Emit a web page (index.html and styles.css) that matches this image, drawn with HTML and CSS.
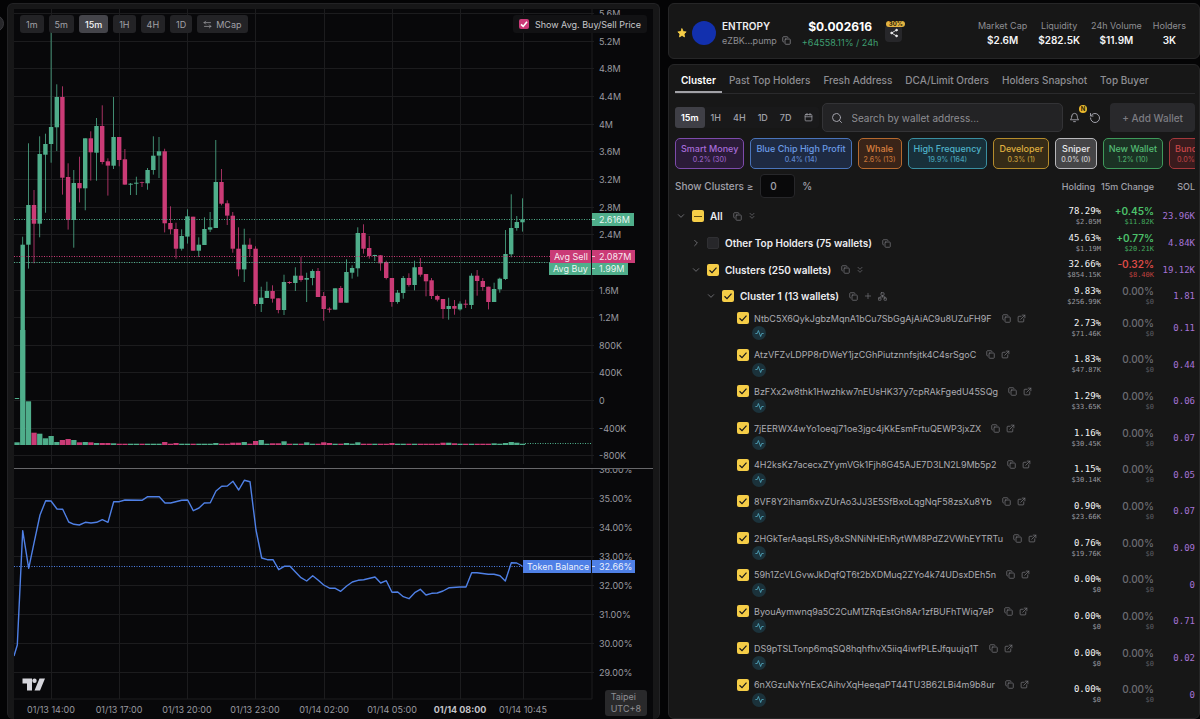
FILE: index.html
```html
<!DOCTYPE html>
<html lang="en">
<head>
<meta charset="utf-8">
<title>ENTROPY – Cluster</title>
<link rel="stylesheet" href="styles.css">
</head>
<body>
<svg class="sprite" aria-hidden="true">
  <symbol id="i-copy" viewBox="0 0 24 24"><rect x="8" y="8" width="14" height="14" rx="2"/><path d="M4 16c-1.1 0-2-.9-2-2V4c0-1.1.9-2 2-2h10c1.1 0 2 .9 2 2"/></symbol>
  <symbol id="i-ext" viewBox="0 0 24 24"><path d="M14 3h7v7M10 14 21 3M18 13v6a2 2 0 0 1-2 2H5a2 2 0 0 1-2-2V8a2 2 0 0 1 2-2h6"/></symbol>
  <symbol id="i-down" viewBox="0 0 24 24"><path d="m4 8 8 8 8-8"/></symbol>
  <symbol id="i-right" viewBox="0 0 24 24"><path d="m8 4 8 8-8 8"/></symbol>
  <symbol id="i-ddown" viewBox="0 0 24 24"><path d="m6 4 6 6 6-6M6 13l6 6 6-6"/></symbol>
  <symbol id="i-plus" viewBox="0 0 24 24"><path d="M12 4v16M4 12h16"/></symbol>
  <symbol id="i-nodes" viewBox="0 0 24 24"><rect x="8" y="2" width="8" height="7" rx="1"/><rect x="1" y="16" width="7" height="6" rx="1"/><rect x="16" y="16" width="7" height="6" rx="1"/><path d="M12 9v4M5 16v-3h14v3"/></symbol>
  <symbol id="i-pulse" viewBox="0 0 24 24"><path d="M2 12h4l3 -8 6 16 3-8h4"/></symbol>
  <symbol id="i-cal" viewBox="0 0 24 24"><rect x="3" y="4" width="18" height="17" rx="2"/><path d="M8 1v5M16 1v5M3 10h18"/></symbol>
  <symbol id="i-search" viewBox="0 0 24 24"><circle cx="11" cy="11" r="8"/><path d="m21 21-4-4"/></symbol>
  <symbol id="i-bell" viewBox="0 0 24 24"><path d="M6 9a6 6 0 0 1 12 0c0 6 3 8 3 8H3s3-2 3-8M10 21h4"/></symbol>
  <symbol id="i-reset" viewBox="0 0 24 24"><path d="M3 12a9 9 0 1 0 9-9 9.700 9.700 0 0 0-6.700 2.700L3 8M3 3v5h5"/></symbol>
  <symbol id="i-share" viewBox="0 0 24 24"><path d="M18 5 6 12l12 7"/><circle class="solid" cx="18" cy="5" r="2"/><circle class="solid" cx="6" cy="12" r="2"/><circle class="solid" cx="18" cy="19" r="2"/></symbol>
  <symbol id="i-star" viewBox="0 0 24 24"><path class="solid" d="m12 2 3 6.500 7 .9-5.200 4.900 1.400 7L12 17.800l-6.200 3.500 1.400-7L2 9.400l7-.9z"/></symbol>
  <symbol id="i-swap" viewBox="0 0 24 24"><path d="M7 3 3 7l4 4M3 7h17M17 13l4 4-4 4M21 17H4"/></symbol>
</svg>

<button class="edge-handle" type="button" aria-label="Toggle sidebar"></button>

<main class="layout">
  <section class="chart-panel">
    <div class="chart">
      <svg class="plot" id="plot" viewBox="14 9 639 710" role="img" aria-label="Market cap and token balance chart"></svg>
      <div class="chart-bar">
        <div class="frames">
          <button type="button">1m</button>
          <button type="button">5m</button>
          <button type="button" class="on">15m</button>
          <button type="button">1H</button>
          <button type="button">4H</button>
          <button type="button">1D</button>
          <button type="button"><svg class="ic s9"><use href="#i-swap"/></svg>MCap</button>
        </div>
        <label class="avg"><input type="checkbox" class="check pink" checked>Show Avg. Buy/Sell Price</label>
      </div>
      <button type="button" class="zone">Taipei<br>UTC+8</button>
    </div>
  </section>

  <div class="side">
    <header class="card token">
      <button class="plain star" type="button" aria-label="Favourite"><svg class="ic s10"><use href="#i-star"/></svg></button>
      <span class="logo"></span>
      <div class="ident">
        <span class="name">ENTROPY</span>
        <span class="addr">eZBK...pump <button class="plain" type="button" aria-label="Copy"><svg class="ic s9"><use href="#i-copy"/></svg></button></span>
      </div>
      <div class="price">
        <strong>$0.002616</strong>
        <span>+64558.11% / 24h</span>
      </div>
      <button class="share" type="button" aria-label="Share"><svg class="ic s10"><use href="#i-share"/></svg><span class="badge">30%</span></button>
      <dl class="stats">
        <div><dt>Market Cap</dt><dd>$2.6M</dd></div>
        <div><dt>Liquidity</dt><dd>$282.5K</dd></div>
        <div><dt>24h Volume</dt><dd>$11.9M</dd></div>
        <div><dt>Holders</dt><dd>3K</dd></div>
      </dl>
    </header>

    <section class="card body">
      <nav class="tabs">
        <a href="#cluster" class="on">Cluster</a>
        <a href="#past">Past Top Holders</a>
        <a href="#fresh">Fresh Address</a>
        <a href="#dca">DCA/Limit Orders</a>
        <a href="#snapshot">Holders Snapshot</a>
        <a href="#buyer">Top Buyer</a>
      </nav>

      <div class="filters">
        <div class="ranges">
          <button type="button" class="on">15m</button>
          <button type="button">1H</button>
          <button type="button">4H</button>
          <button type="button">1D</button>
          <button type="button">7D</button>
          <button type="button" aria-label="Pick date"><svg class="ic s9"><use href="#i-cal"/></svg></button>
        </div>
        <label class="search"><svg class="ic s12"><use href="#i-search"/></svg><input type="text" aria-label="Search by wallet address" placeholder="Search by wallet address..."></label>
        <div class="tools">
          <button class="plain bell" type="button" aria-label="Alerts"><svg class="ic s11"><use href="#i-bell"/></svg><span class="dot">N</span></button>
          <button class="plain" type="button" aria-label="Reset"><svg class="ic s12"><use href="#i-reset"/></svg></button>
        </div>
        <button class="add" type="button">+ Add Wallet</button>
      </div>

      <div class="chips">
        <button type="button" class="chip purple"><b>Smart Money</b><span>0.2% (30)</span></button>
        <button type="button" class="chip blue"><b>Blue Chip High Profit</b><span>0.4% (14)</span></button>
        <button type="button" class="chip orange"><b>Whale</b><span>2.6% (13)</span></button>
        <button type="button" class="chip cyan"><b>High Frequency</b><span>19.9% (164)</span></button>
        <button type="button" class="chip yellow"><b>Developer</b><span>0.3% (1)</span></button>
        <button type="button" class="chip grey"><b>Sniper</b><span>0.0% (0)</span></button>
        <button type="button" class="chip green"><b>New Wallet</b><span>1.2% (10)</span></button>
        <button type="button" class="chip red"><b>Bundler</b><span>0.0% (0)</span></button>
      </div>

      <div class="cols head">
        <label class="min">Show Clusters ≥ <input type="text" value="0"> %</label>
        <span class="h-hold">Holding</span><span>15m Change</span><span>SOL</span>
      </div>

      <div class="tree" id="holders">
        <div class="cols row">
          <div class="cell"><button class="plain twist" type="button" aria-label="Collapse"><svg class="ic s8"><use href="#i-down"/></svg></button><input type="checkbox" class="check part" id="all"><label for="all">All</label><svg class="ic s9"><use href="#i-copy"/></svg><svg class="ic s8"><use href="#i-ddown"/></svg></div>
          <div class="hold">78.29%<small>$2.05M</small></div><div class="chg up">+0.45%<small>$11.82K</small></div><div class="sol">23.96K</div>
        </div>
        <div class="cols row">
          <div class="cell l2"><button class="plain twist" type="button" aria-label="Expand"><svg class="ic s8"><use href="#i-right"/></svg></button><input type="checkbox" class="check" id="other"><label for="other">Other Top Holders (75 wallets)</label><svg class="ic s9"><use href="#i-copy"/></svg></div>
          <div class="hold">45.63%<small>$1.19M</small></div><div class="chg up">+0.77%<small>$20.21K</small></div><div class="sol">4.84K</div>
        </div>
        <div class="cols row">
          <div class="cell l2"><button class="plain twist" type="button" aria-label="Collapse"><svg class="ic s8"><use href="#i-down"/></svg></button><input type="checkbox" class="check" id="clusters" checked><label for="clusters">Clusters (250 wallets)</label><svg class="ic s9"><use href="#i-copy"/></svg><svg class="ic s8"><use href="#i-ddown"/></svg></div>
          <div class="hold">32.66%<small>$854.15K</small></div><div class="chg dn">-0.32%<small>$8.40K</small></div><div class="sol">19.12K</div>
        </div>
        <div class="cols row">
          <div class="cell l3"><button class="plain twist" type="button" aria-label="Collapse"><svg class="ic s8"><use href="#i-down"/></svg></button><input type="checkbox" class="check" id="c1" checked><label for="c1">Cluster 1 (13 wallets)</label><svg class="ic s9"><use href="#i-copy"/></svg><svg class="ic s8"><use href="#i-plus"/></svg><svg class="ic s9"><use href="#i-nodes"/></svg></div>
          <div class="hold">9.83%<small>$256.99K</small></div><div class="chg">0.00%<small>$0</small></div><div class="sol">1.81</div>
        </div>
      </div>
    </section>
  </div>
</main>
<script src="app.js"></script>
</body>
</html>
```

FILE: styles.css
```css
* { box-sizing: border-box; }
body {
  margin: 0;
  background: #040405;
  color: #a1a1aa;
  font-family: Inter, "Liberation Sans", sans-serif;
  font-size: 9px;
}
button, input { font: inherit; color: inherit; }
button { border: 0; cursor: pointer; }
a { color: inherit; text-decoration: none; }
.sprite { display: none; }
.ic { fill: none; stroke: currentColor; stroke-width: 2; stroke-linecap: round; stroke-linejoin: round; flex: none; display: block; }
.solid { fill: currentColor; }
.s8 { width: 8px; height: 8px; }
.s9 { width: 9px; height: 9px; }
.s10 { width: 10px; height: 10px; }
.s11 { width: 11px; height: 11px; }
.s12 { width: 12px; height: 12px; }
.plain { background: none; padding: 0; display: inline-flex; }
.twist { width: 11px; justify-content: center; color: #94949a; }
.edge-handle { position: absolute; left: -13px; top: 15px; width: 17px; height: 17px; padding: 0; border-radius: 50%; background: #27272a; border: 1px solid #3a3a3e; }

.layout { display: grid; grid-template-columns: minmax(0, 653fr) minmax(0, 532fr); gap: 8px; padding: 3px 0 0 7px; min-height: 100vh; }

/* chart */
.chart-panel { background: #171718; border: 1px solid #232325; border-bottom: 0; border-radius: 6px; padding: 5px 6px 0; overflow: hidden; }
.chart { position: relative; background: #08080a; height: 100%; }
.plot { display: block; width: 100%; height: auto; font-size: 9px; }
.plot .tick { fill: #9a9aa0; }
.plot .strong { fill: #c4c4c8; font-weight: 700; }
.plot .tag { fill: #fff; fill-opacity: .9; }
.chart-bar { position: absolute; top: 6px; left: 6px; right: 6px; display: flex; justify-content: space-between; }
.frames { display: flex; gap: 5px; }
.frames button { display: flex; align-items: center; gap: 4px; height: 18px; padding: 0 6px; border-radius: 3px; background: #232326; color: #a1a1a6; }
.frames .on { background: #44444a; color: #f4f4f5; font-weight: 500; }
.avg { display: flex; align-items: center; gap: 6px; height: 18px; padding: 0 6px; border-radius: 3px; background: #121214; color: #c8c8cc; }
.zone { position: absolute; right: 6px; bottom: 3px; padding: 1px 6px; border-radius: 3px; background: #29292b; color: #8e8e93; text-align: left; line-height: 12px; }

.check { appearance: none; flex: none; width: 12px; height: 12px; margin: 0; border-radius: 2px; background: #27272a center / 10px no-repeat; border: 1px solid #303033; }
.check:checked { border: 0; background-color: #f5cd47; background-image: url("data:image/svg+xml,%3Csvg xmlns='http://www.w3.org/2000/svg' viewBox='0 0 10 10'%3E%3Cpath d='M1.5 5.300 4 7.600 8.500 2.600' fill='none' stroke='%2318181b' stroke-width='1.200'/%3E%3C/svg%3E"); }
.check.part { border: 0; background-color: #f5cd47; background-image: linear-gradient(#5c4a10, #5c4a10); background-size: 8px 1px; }
.check.pink { width: 10px; height: 10px; }
.check.pink:checked { background-color: #cb3a78; background-image: url("data:image/svg+xml,%3Csvg xmlns='http://www.w3.org/2000/svg' viewBox='0 0 10 10'%3E%3Cpath d='M2 5.300 4.200 7.400 8 2.800' fill='none' stroke='white' stroke-width='1.600'/%3E%3C/svg%3E"); }

/* side */
.side { display: flex; flex-direction: column; gap: 5px; min-width: 0; }
.card { background: #171717; border: 1px solid #262627; border-radius: 6px; }
.token { display: flex; align-items: center; height: 56px; padding: 4px 13px 0 8px; }
.star { color: #f5cd47; }
.logo { width: 24px; height: 24px; margin: 0 6px 0 5px; border-radius: 50%; background: #1230ae; }
.ident { display: grid; gap: 1px; line-height: 14px; }
.name { font-size: 10px; font-weight: 600; color: #ededf0; }
.addr { display: flex; align-items: center; gap: 5px; color: #8e8e93; }
.price { display: grid; justify-items: center; line-height: 16px; margin-left: 11px; padding-top: 4px; color: #3f9f72; }
.price strong { font-size: 12px; font-weight: 700; color: #fff; }
.share { position: relative; display: grid; place-items: center; width: 17px; height: 17px; margin-left: 7px; padding: 0; border-radius: 4px; background: #27272a; color: #f4f4f5; }
.badge { position: absolute; top: -4px; left: 1px; width: 19px; height: 6px; border-radius: 3px; background: #e3b341; color: #2a2208; font-size: 6px; line-height: 6px; font-weight: 700; text-align: center; }
.stats { display: flex; gap: 11px; margin: 0 0 0 auto; text-align: center; line-height: 14px; }
.stats dt { color: #8e8e93; }
.stats dd { margin: 0; font-size: 10px; font-weight: 600; color: #f4f4f5; }

.body { flex: 1; display: flex; flex-direction: column; padding: 0 4px 5px 6px; }
.tabs { display: flex; gap: 1px; height: 29px; border-bottom: 1px solid #2a2a2c; font-size: 10px; font-weight: 500; color: #8e8e93; }
.tabs a { display: flex; align-items: center; padding: 3px 6px 0; white-space: nowrap; border-bottom: 2px solid transparent; }
.tabs .on { color: #fff; font-weight: 600; border-color: #a1a1a6; }

.filters { display: flex; align-items: center; margin-top: 9px; }
.ranges { display: flex; border-radius: 3px; background: #19191a; }
.ranges button { display: grid; place-items: center; height: 21px; padding: 0 6px; border-radius: 3px; background: none; font-weight: 500; }
.ranges .on { background: #3f3f46; color: #fff; font-weight: 600; }
.search { flex: 1; display: flex; align-items: center; gap: 9px; min-width: 0; height: 29px; margin-left: 3px; padding: 0 8px; border: 1px solid #333336; border-radius: 5px; background: #232325; }
.search input { flex: 1; min-width: 0; padding: 0; border: 0; outline: 0; background: none; font-size: 10px; }
.search input::placeholder { color: #8e8e93; opacity: 1; }
.tools { display: flex; align-items: center; gap: 9px; margin: 0 9px 0 6px; }
.bell { position: relative; }
.dot { position: absolute; top: -7px; right: -7px; width: 8px; height: 8px; border-radius: 50%; background: #eab92d; color: #2a2208; font-size: 6px; line-height: 8px; font-weight: 700; }
.add { height: 29px; padding: 0 12px; border-radius: 4px; background: #29292c; color: #7c7c82; font-size: 10px; font-weight: 500; white-space: nowrap; }

.chips { display: flex; gap: 6px; margin-top: 6px; overflow-x: auto; scrollbar-width: none; }
.chip { flex: none; display: grid; align-content: center; justify-items: center; height: 31px; padding: 0 5px; border: 1px solid; border-radius: 5px; line-height: 12px; white-space: nowrap; }
.chip b { font-weight: 500; }
.chip span { font-size: 7px; font-weight: 500; line-height: 10px; opacity: .85; }
.purple { background: #2b1b38; color: #a76bd8; border-color: #7d4bab; }
.blue { background: #1e2a42; color: #6b9be6; border-color: #4a74ba; }
.orange { background: #3a2418; color: #d9803f; border-color: #b5692f; }
.cyan { background: #18303a; color: #4fb3c9; border-color: #3a8fa1; }
.yellow { background: #352b17; color: #dfb040; border-color: #b58c2c; }
.grey { background: #454547; color: #e8e8ea; border-color: #b8b8bb; }
.green { background: #1b3224; color: #55bd74; border-color: #3f9a5b; }
.red { background: #3a1b1d; color: #c8474a; border-color: #a3383b; }

.cols { display: grid; grid-template-columns: minmax(0, 1fr) 50px 53px 41px; align-items: center; text-align: right; }
.head { margin-top: 5px; font-weight: 500; white-space: nowrap; }
.h-hold { padding-right: 6px; }
.min { display: flex; align-items: center; gap: 7px; font-size: 10px; }
.min input { width: 35px; height: 24px; padding: 0 9px; border: 1px solid #27272a; border-radius: 4px; background: #09090a; }

.tree { flex: 1; display: flex; flex-direction: column; margin-top: 5px; }
.row { flex: 8 1 0; min-height: 26px; }
.row.leaf { flex: 11 1 0; min-height: 36px; }
.cell { display: flex; align-items: center; gap: 6px; color: #76767b; text-align: left; }
.cell label { margin-right: 4px; font-size: 10px; font-weight: 600; color: #ededf0; white-space: nowrap; }
.l2 { padding-left: 15px; }
.l3 { padding-left: 30px; }
.leaf .cell { display: grid; grid-template-columns: 12px 1fr; gap: 2px 5px; padding: 0 0 4px 62px; }
.wallet { display: flex; align-items: center; gap: 6px; }
.leaf label { font-weight: 400; font-size: 9px; color: #acacb2; }
.pulse { grid-column: 2; display: grid; place-items: center; width: 14px; height: 14px; margin-left: -2px; border-radius: 50%; background: #1b323b; color: #58b4cc; }
.hold, .sol, .row small { font-family: "DejaVu Sans Mono", "Liberation Mono", monospace; }
.row small { display: block; font-size: 7px; line-height: 11px; font-weight: 400; }
.hold { line-height: 12px; color: #f4f4f5; }
.hold small { color: #9a9aa0; }
.chg { font-size: 10px; line-height: 12px; color: #6c6c72; font-weight: 500; }
.chg small { color: #5c5c61; }
.chg.up { color: #4cc26b; font-weight: 600; }
.chg.dn { color: #dc4a46; font-weight: 600; }
.up small, .dn small { color: inherit; opacity: .85; }
.sol { color: #a573d6; }
```

FILE: app.js
```js
/* wallet rows of the open cluster */
const wallets = [
  ["NtbC5X6QykJgbzMqnA1bCu7SbGgAjAiAC9u8UZuFH9F", "2.73%", "$71.46K", "0.11"],
  ["AtzVFZvLDPP8rDWeY1jzCGhPiutznnfsjtk4C4srSgoC", "1.83%", "$47.87K", "0.44"],
  ["BzFXx2w8thk1Hwzhkw7nEUsHK37y7cpRAkFgedU45SQg", "1.29%", "$33.65K", "0.06"],
  ["7jEERWX4wYo1oeqj71oe3jgc4jKkEsmFrtuQEWP3jxZX", "1.16%", "$30.45K", "0.07"],
  ["4H2ksKz7acecxZYymVGk1Fjh8G45AJE7D3LN2L9Mb5p2", "1.15%", "$30.14K", "0.05"],
  ["8VF8Y2iham6xvZUrAo3JJ3E5SfBxoLqgNqF58zsXu8Yb", "0.90%", "$23.66K", "0.07"],
  ["2HGkTerAaqsLRSy8xSNNiNHEhRytWM8PdZ2VWhEYTRTu", "0.76%", "$19.76K", "0.09"],
  ["59h1ZcVLGvwJkDqfQT6t2bXDMuq2ZYo4k74UDsxDEh5n", "0.00%", "$0", "0"],
  ["ByouAymwnq9a5C2CuM1ZRqEstGh8Ar1zfBUFhTWiq7eP", "0.00%", "$0", "0.71"],
  ["DS9pTSLTonp6mqSQ8hqhfhvX5iiq4iwfPLEJfquujq1T", "0.00%", "$0", "0.02"],
  ["6nXGzuNxYnExCAihvXqHeeqaPT44TU3B62LBi4m9b8ur", "0.00%", "$0", "0"]
];
document.getElementById("holders").insertAdjacentHTML("beforeend", wallets.map(([a, pct, usd, sol], i) => `
  <div class="cols row leaf">
    <div class="cell"><input type="checkbox" class="check" id="w${i}" checked>
      <div class="wallet"><label for="w${i}">${a}</label><svg class="ic s9"><use href="#i-copy"/></svg><svg class="ic s9"><use href="#i-ext"/></svg></div>
      <span class="pulse"><svg class="ic s9"><use href="#i-pulse"/></svg></span></div>
    <div class="hold">${pct}<small>${usd}</small></div><div class="chg">0.00%<small>$0</small></div><div class="sol">${sol}</div>
  </div>`).join(""));

/* candles: direction, high, body top, body bottom, low (thirds of a chart unit) */
const candles = `g 1194 1194 1197 1197
g 710 734 1196 1196
g 430 615 734 806
r 570 615 671 790
g 409 462 671 712
g 401 432 464 638
g 92 381 432 488
g 253 291 382 453
r 259 291 533 584
r 490 531 660 689
g 510 549 660 743
r 470 549 565 607
g 415 415 565 631
r 394 415 457 542
g 354 378 458 542
r 316 378 486 493
r 475 484 497 587
g 291 411 497 507
r 411 411 480 499
r 447 478 554 554
g 549 551 554 585
g 530 548 551 585
r 545 546 548 561
g 504 510 550 569
g 409 467 510 524
g 411 454 467 534
r 446 454 670 697
r 619 669 688 703
r 668 687 746 776
g 688 708 746 752
g 628 649 710 731
r 650 650 752 752
g 712 734 752 771
g 652 687 735 735
g 636 682 689 696
g 420 546 684 684
r 507 546 611 616
r 601 610 647 675
r 636 647 746 758
r 682 746 808 829
g 686 734 808 846
r 715 734 747 769
r 739 746 912 918
g 860 893 912 936
g 845 873 894 894
r 856 873 896 908
r 895 895 930 940
g 824 846 930 945
r 844 846 849 852
g 802 827 849 873
r 770 827 840 845
g 818 834 839 906
g 808 813 834 856
r 804 813 891 891
r 876 888 927 962
r 922 926 929 938
g 865 865 929 929
r 858 864 908 908
g 778 816 908 908
g 796 804 818 836
g 682 699 805 830
r 673 699 746 761
r 708 744 768 776
g 764 765 768 783
r 765 766 790 812
r 782 786 834 838
r 834 834 906 920
g 870 878 906 911
g 828 834 879 896
r 820 834 855 860
g 782 802 855 871
r 774 801 824 830
r 822 822 844 889
r 834 841 888 897
r 884 888 899 904
r 897 897 927 956
g 893 918 927 959
r 900 918 926 944
g 904 911 928 932
r 899 911 914 924
g 820 827 915 927
r 810 827 843 887
r 834 843 861 872
r 860 860 906 928
g 848 867 906 906
g 833 836 868 878
g 690 762 837 840
g 583 684 763 772
g 648 666 684 692
g 595 658 667 695`.split("\n").map(l => l.split(" "));
const volume = { 0: 8, 1: 345, 2: 131, 3: 37, 4: 34, 5: 20, 6: 27, 7: 9, 8: 15, 9: 18, 10: 15, 11: 8, 12: 9, 13: 8, 14: 6, 15: 6, 16: 6, 17: 5, 26: 9, 28: 6, 35: 6, 38: 7, 39: 7, 40: 9, 42: 12, 43: 15, 45: 5, 46: 5, 47: 11, 51: 8, 54: 8, 55: 6, 58: 6, 60: 8, 66: 6, 75: 7, 76: 7, 77: 5, 84: 5, 86: 6, 87: 9, 88: 7 };
const balance = "42,573 52,540 68,197 86,310 103,230 120,150 137,107 153,108 171,132 188,133 206,171 222,178 238,180 256,172 273,174 290,172 307,164 324,172 341,110 358,110 375,105 426,106 443,95 478,95 495,114 512,114 545,106 563,105 580,137 597,129 613,114 631,113 648,78 665,64 682,63 699,49 716,75 733,46 750,50 768,195 785,279 802,284 819,284 836,314 853,304 870,304 887,322 903,338 920,348 938,332 955,346 971,360 990,370 1006,370 1022,379 1040,363 1057,351 1074,346 1091,344 1125,336 1142,354 1159,347 1176,382 1193,381 1210,395 1227,401 1244,383 1261,373 1278,390 1295,385 1312,384 1329,378 1348,368 1380,366 1398,366 1415,323 1431,323 1465,328 1482,328 1500,332 1516,348 1534,293 1550,294 1567,303";

const GREEN = "#4fae8b", RED = "#ca3b76", BLUE = "#4f80e6", GRID = "#1c1c1e";
const line = (x1, y1, x2, y2, c, extra = "") => `<path d="M${x1} ${y1}L${x2} ${y2}" stroke="${c}" ${extra}/>`;
const rect = (x, y, w, h, c) => `<rect x="${x}" y="${y}" width="${w}" height="${h}" fill="${c}"/>`;
const text = (x, y, s, cls, anchor = "start") => `<text x="${x}" y="${y}" class="${cls}" text-anchor="${anchor}">${s}</text>`;
const dots = 'stroke-dasharray="1 1.500"';
let out = "";

const times = [[51, "01/13 14:00"], [119, "01/13 17:00"], [187, "01/13 20:00"], [255, "01/13 23:00"], [324, "01/14 02:00"], [392, "01/14 05:00"], [460, "01/14 08:00"], [523, "01/14 10:45"]];
for (const [x, s] of times) {
  out += line(x + .5, 9, x + .5, 699, GRID) + text(x, 713, s, s.endsWith("08:00") ? "strong" : "tick", "middle");
}
const prices = ["5.6M", "5.2M", "4.8M", "4.4M", "4M", "3.6M", "3.2M", "2.8M", "2.4M", "", "1.6M", "1.2M", "800K", "400K", "0", "-400K", "-800K"];
prices.forEach((s, i) => {
  const y = Math.round(13 + i * 27.650);
  out += line(14, y + .5, 594, y + .5, GRID) + text(599, y + 4, s, "tick");
});
["36.00%", "35.00%", "34.00%", "33.00%", "32.00%", "31.00%", "30.00%", "29.00%"].forEach((s, i) => {
  const y = 469 + i * 29;
  out += (i ? line(14, y + .5, 594, y + .5, GRID) : "") + text(599, y + 4, s, "tick");
});
out += line(592, 9, 592, 699, GRID) + line(14, 699, 592, 699, GRID);
out += rect(14, 464, 639, 4, "#08080a") + rect(14, 468, 639, 1, "#67676a");

candles.forEach(([d, hi, top, bot, lo], i) => {
  const x = 17 + i * 5.680, c = d === "g" ? GREEN : RED, h = (volume[i] || 4) / 3;
  out += rect((x - 2.600).toFixed(1), (445 - h).toFixed(1), 5.300, h.toFixed(1), c);
  out += rect((x - .4).toFixed(1), (hi / 3).toFixed(1), .8, ((lo - hi) / 3).toFixed(1), c);
  out += rect((x - 2.200).toFixed(1), (top / 3).toFixed(1), 4.400, ((bot - top) / 3).toFixed(1), c);
});
out += line(14, 219.500, 592, 219.500, GREEN, dots) + line(14, 256.500, 550, 256.500, RED, dots) + line(14, 262.500, 550, 262.500, GREEN, dots);
out += line(525, 443.500, 592, 443.500, GREEN, dots) + line(14, 566.500, 523, 566.500, BLUE, dots);
out += `<polyline fill="none" stroke="${BLUE}" stroke-width="1.400" stroke-linejoin="round" points="${balance.split(" ").map(p => { const [x, y] = p.split(","); return (x / 3).toFixed(1) + "," + (465 + y / 3).toFixed(1); }).join(" ")}"/>`;

const tag = (x, y, w, c, label, value) =>
  (label ? rect(x, y, 591 - x, 13, c) + text(x + 4, y + 10, label, "tag") : "") +
  rect(592, y, w, 13, c) + line(592, y + 6.500, 595, y + 6.500, "#ffffffb0") + text(599, y + 10, value, "tag");
out += tag(0, 213, 42, GREEN, "", "2.616M") + tag(549, 262, 36, GREEN, "Avg Buy", "1.99M") + tag(550, 250, 43, RED, "Avg Sell", "2.087M") + tag(523, 560, 43, BLUE, "Token Balance", "32.66%");

/* chart vendor mark */
out += '<path fill="#d6d6dc" d="M22.500 678.500h9.500v12h-5v-7h-4.500zM39.500 678.500h5.500l-5 12h-5.500z"/><circle cx="34.500" cy="680.700" r="2.200" fill="#d6d6dc"/>';
document.getElementById("plot").innerHTML = out;
```
